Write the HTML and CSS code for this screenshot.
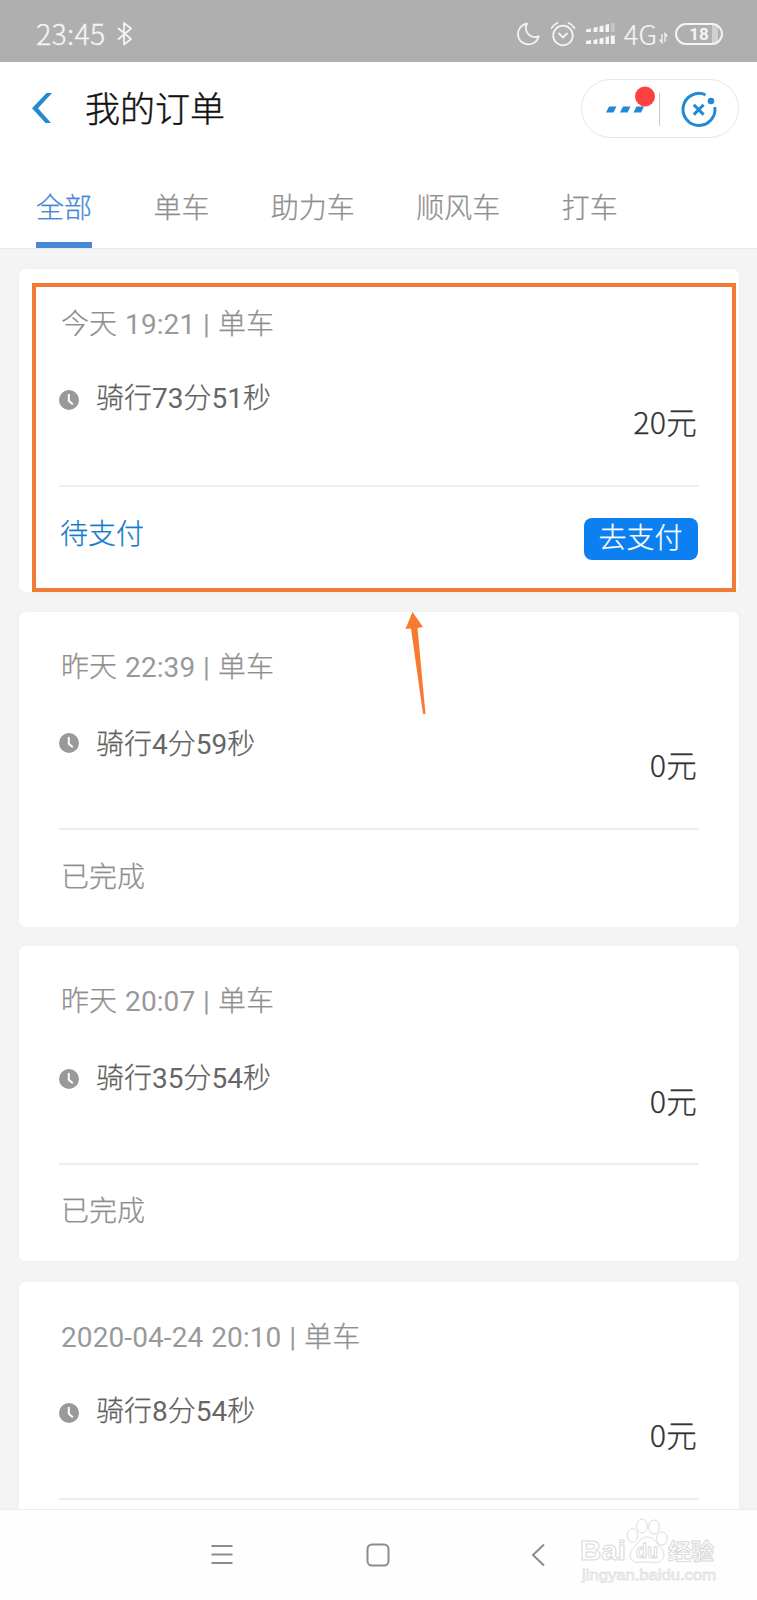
FILE: index.html
```html
<!DOCTYPE html>
<html lang="zh-CN">
<head>
<meta charset="utf-8">
<title>我的订单</title>
<link rel="stylesheet" href="styles.css">
</head>
<body>
<div class="screen">
  <div class="statusbar">
    <div class="status-left">
      <span class="clock">23:45</span>
      <svg class="bluetooth" width="16" height="26" viewBox="0 0 16 26"><path d="M1 7l13 11-7 5.500V2l7 5.500L1 18.500" fill="none" stroke="#f4f4f4" stroke-width="1.800" stroke-linejoin="round"/></svg>
    </div>
    <div class="status-right">
      <svg width="24" height="26" viewBox="0 0 24 26"><path d="M10 2.500C4.500 3.500 1 8 1 13c0 6 4.500 10.300 10.300 10.300 5.200 0 9.200-3.200 10.500-8C14 18.500 6 11 10 2.500z" fill="none" stroke="#f4f4f4" stroke-width="1.800" stroke-linejoin="round"/></svg>
      <svg class="alarm" width="26" height="26" viewBox="0 0 26 26"><g fill="none" stroke="#f4f4f4" stroke-width="1.800" stroke-linecap="round"><circle cx="13" cy="14.500" r="9.800"/><path d="M1.500 7Q3.500 3.500 7.500 2M18.500 2Q22.500 3.500 24.500 7M9 12.500l4 4 4-4"/></g></svg>
      <svg class="signal" width="30" height="24" viewBox="0 0 30 24"><g fill="#f4f4f4"><path d="M0 7.500l5-1V10H0zM7.500 5.800l4-1V10h-4zM13.500 4.300l4-.8V10h-4zM19.500 2.800l3.500-.8v8h-3.500zM0 19l5-1v4H0zM7.500 18l4-1v5h-4zM13.500 16.500l4-1V22h-4zM19.500 15l3.500-.7V22h-3.500zM24.800 13.500h4V22h-4z"/><path d="M24.800 1h4v9h-4z" opacity=".3"/></g></svg>
      <span class="network">4G</span>
      <svg class="updown" width="9" height="12" viewBox="0 0 9 12"><path d="M3 2v8.500L.6 7.500M6 10V1.500l2.400 3" fill="none" stroke="#f4f4f4" stroke-width="1.300"/></svg>
      <span class="battery">18</span>
    </div>
  </div>

  <header class="header">
    <div class="titlebar">
      <svg class="back" width="22" height="32" viewBox="0 0 22 32"><path d="M15.500 1h5.500L7 16.200 20 31h-5.500L1 16.200z" fill="#2389d3"/></svg>
      <h1 class="title">我的订单</h1>
      <div class="capsule">
        <svg width="156" height="57" viewBox="0 0 156 57"><g fill="#2389d3"><path d="M28 26.500h7.500l-3 6H25zM42 26.500h7.500l-3 6H39zM55.500 26.500H63l-3 6h-7.500z"/><circle cx="130" cy="21" r="3.300"/></g><circle cx="64" cy="16.500" r="10" fill="#fc4140"/><path d="M78.500 13v33" stroke="#c9c9c9"/><g fill="none" stroke="#2389d3"><path d="M124.500 14.800a16 16 0 1 0 9.300 12.200" stroke-width="3"/><path d="M112.800 24.800l9.800 9.800M122.600 24.800l-9.800 9.800" stroke-width="3"/></g></svg>
      </div>
    </div>
    <nav class="tabs">
      <span class="tab tab-active">全部</span>
      <span class="tab">单车</span>
      <span class="tab">助力车</span>
      <span class="tab">顺风车</span>
      <span class="tab">打车</span>
    </nav>
  </header>

  <main class="orders">
    <article class="card card-unpaid">
      <div class="when">今天<span class="num"> 19:21 | </span>单车</div>
      <div class="details">
        <svg class="ride-icon" width="20" height="20" viewBox="0 0 20 20"><circle cx="10" cy="10" r="10" fill="#999"/><path d="M9.800 4v6.800l4 3.500" fill="none" stroke="#fff" stroke-width="2"/></svg>
        <span class="duration">骑行<span class="num">73</span>分<span class="num">51</span>秒</span><span class="price">20元</span>
      </div>
      <div class="footer"><span class="state state-unpaid">待支付</span><span class="pay">去支付</span></div>
    </article>
    <article class="card">
      <div class="when">昨天<span class="num"> 22:39 | </span>单车</div>
      <div class="details details-low">
        <svg class="ride-icon" width="20" height="20" viewBox="0 0 20 20"><circle cx="10" cy="10" r="10" fill="#999"/><path d="M9.800 4v6.800l4 3.500" fill="none" stroke="#fff" stroke-width="2"/></svg>
        <span class="duration">骑行<span class="num">4</span>分<span class="num">59</span>秒</span><span class="price">0元</span>
      </div>
      <div class="footer"><span class="state">已完成</span></div>
    </article>
    <article class="card card-raised">
      <div class="when">昨天<span class="num"> 20:07 | </span>单车</div>
      <div class="details">
        <svg class="ride-icon" width="20" height="20" viewBox="0 0 20 20"><circle cx="10" cy="10" r="10" fill="#999"/><path d="M9.800 4v6.800l4 3.500" fill="none" stroke="#fff" stroke-width="2"/></svg>
        <span class="duration">骑行<span class="num">35</span>分<span class="num">54</span>秒</span><span class="price">0元</span>
      </div>
      <div class="footer"><span class="state">已完成</span></div>
    </article>
    <article class="card">
      <div class="when"><span class="num">2020-04-24 20:10 | </span>单车</div>
      <div class="details">
        <svg class="ride-icon" width="20" height="20" viewBox="0 0 20 20"><circle cx="10" cy="10" r="10" fill="#999"/><path d="M9.800 4v6.800l4 3.500" fill="none" stroke="#fff" stroke-width="2"/></svg>
        <span class="duration">骑行<span class="num">8</span>分<span class="num">54</span>秒</span><span class="price">0元</span>
      </div>
    </article>
  </main>

  <nav class="navbar">
    <svg width="22" height="22" viewBox="0 0 22 22"><path d="M.5 2h21M.5 10.500h21M.5 19h21" stroke="#8c8c8c" stroke-width="2"/></svg>
    <svg class="home" width="24" height="24" viewBox="0 0 24 24"><rect x="1.500" y="1.500" width="21" height="21" rx="4.500" fill="none" stroke="#8c8c8c" stroke-width="2"/></svg>
    <svg class="nav-back" width="14" height="24" viewBox="0 0 14 24"><path d="M13 1.500L2 12l11 10.500" fill="none" stroke="#8c8c8c" stroke-width="2"/></svg>
  </nav>

  <div class="highlight"></div>
  <svg class="arrow" width="22" height="104" viewBox="0 0 22 104"><path d="M7.500 0L18 15l-5.500 1L20.500 102h-2.500L6 16.500.5 17z" fill="#f87a30"/></svg>
  <svg class="watermark" width="140" height="74" viewBox="0 0 140 74">
    <g fill="#fff" stroke="#dcdcdc" stroke-width="1">
      <ellipse cx="52.500" cy="26.500" rx="5.300" ry="6.700"/><ellipse cx="62" cy="17" rx="5.300" ry="7"/><ellipse cx="74" cy="18" rx="5.300" ry="7"/><ellipse cx="82" cy="29.500" rx="5.300" ry="6.700"/>
      <path d="M67 28c6 0 9 5 13 10 7 7 4 16-5 15.500-5-.7-11-.7-16 0-9 .5-12-8-5-15 4-5 7-10.500 13-10.500z"/>
    </g>
    <g class="mark-text">
      <text x="0" y="51" font-size="28" textLength="46" lengthAdjust="spacingAndGlyphs">Bai</text>
      <text x="56" y="49" font-size="20" textLength="22" lengthAdjust="spacingAndGlyphs">du</text>
      <text x="88" y="50" font-size="22" textLength="46" lengthAdjust="spacingAndGlyphs">经验</text>
      <text class="mark-url" x="2" y="71" font-size="14" textLength="134" lengthAdjust="spacingAndGlyphs">jingyan.baidu.com</text>
    </g>
  </svg>
</div>
</body>
</html>
```
FILE: styles.css
```css
* { box-sizing: border-box; }
body { margin: 0; background: #f4f4f4; font-family: Roboto, "Noto Sans CJK SC", sans-serif; font-size: 28px; font-weight: 400; }
svg { display: block; flex: none; }
.screen { position: relative; width: 757px; height: 1600px; overflow: hidden; display: flex; flex-direction: column; }

.statusbar { flex: none; height: 62px; padding: 5px 34px 0 36px; display: flex; justify-content: space-between; align-items: center; background: #afafaf; color: #f4f4f4; }
.status-left, .status-right { display: flex; align-items: center; }
.clock { margin-top: -2px; font-family: "Noto Sans CJK SC", sans-serif; font-weight: 300; font-size: 28.5px; line-height: 40px; letter-spacing: 0.3px; -webkit-text-stroke: 0.3px; }
.bluetooth { margin-left: 11px; }
.alarm { margin-left: 9px; }
.signal { margin-left: 10px; }
.network { margin: -2px 0 0 8px; font-family: "Noto Sans CJK SC", sans-serif; font-weight: 300; font-size: 27.5px; line-height: 40px; -webkit-text-stroke: 0.2px; }
.updown { margin: 9px 7px 0 2px; }
.battery { width: 48px; height: 22px; border: 2px solid #f4f4f4; border-radius: 11px; font-size: 17px; font-weight: 700; line-height: 18px; text-align: center; background: linear-gradient(90deg, transparent 35px, #cfcfcf 35px, #cfcfcf 41px, transparent 41px); }

.header { flex: none; height: 187px; background: #fff; border-bottom: 1px solid #e9e9e9; display: flex; flex-direction: column; }
.titlebar { height: 93px; padding: 0 18px 0 31px; display: flex; align-items: center; }
.back { margin-top: -1px; }
.title { margin: -4px 0 0 32px; font-size: 35px; font-weight: 300; line-height: 50px; font-family: "Noto Sans CJK SC", sans-serif; color: #111; -webkit-text-stroke: 0.4px; }
.capsule { width: 158px; height: 59px; margin: 0 0 1px auto; border: 1px solid #e6e6e6; border-radius: 30px; }
.capsule svg { margin-left: -1px; }
.tabs { flex: 1; padding-left: 36px; display: flex; gap: 61.4px; }
.tab { padding-top: 31px; line-height: 40px; font-family: "Noto Sans CJK SC", sans-serif; font-weight: 300; color: #8f8f8f; border-bottom: 6px solid transparent; -webkit-text-stroke: 0.25px; }
.tab-active { color: #4788d6; border-bottom-color: #4788d6; }

.orders { flex: none; height: 1260px; padding: 20px 18px 0 19px; overflow: hidden; display: flex; flex-direction: column; gap: 20px; }
.card { flex: none; height: 315px; padding: 36px 40px 0; background: #fff; border-radius: 7px; box-shadow: 0 0 14px rgba(0, 0, 0, 0.02); }
.card-unpaid { height: 323px; }
.card-raised { margin: -1px 0 1px; }
.when { padding: 0 0 0 2px; height: 40px; line-height: 40px; font-weight: 300; color: #8f8f8f; letter-spacing: 0.1px; -webkit-text-stroke: 0.25px; }
.num { font-weight: 400; -webkit-text-stroke: 0; }
.when .num { color: #999; word-spacing: 0.8px; }
.details { height: 142px; display: flex; align-items: flex-start; border-bottom: 2px solid #eee; }
.ride-icon { margin-top: 45px; }
.duration { margin: 34px 0 0 17px; line-height: 40px; font-weight: 300; color: #606060; -webkit-text-stroke: 0.25px; }
.duration .num { color: #666; }
.card-raised .details { height: 143px; }
.card-raised .ride-icon { margin-top: 47px; }
.card-raised .duration { margin-top: 37px; }
.card-raised .price { margin-top: 58px; }
.details-low .duration { margin-top: 37px; }
.price { margin: 56px 2px 0 auto; font-family: "Noto Sans CJK SC", sans-serif; font-size: 30.5px; line-height: 40px; font-weight: 300; color: #333; letter-spacing: 0.2px; -webkit-text-stroke: 0.25px; }
.footer { padding-right: 1px; display: flex; justify-content: space-between; align-items: flex-start; font-family: "Noto Sans CJK SC", sans-serif; font-weight: 300; -webkit-text-stroke: 0.25px; }
.state { margin-top: 25px; padding-left: 2px; line-height: 40px; color: #8f8f8f; }
.card-raised .state { margin-top: 24px; }
.state-unpaid { padding-left: 1px; color: #1779c9; }
.pay { width: 114px; height: 42px; margin-top: 31px; padding-right: 1px; border-radius: 8px; background: #0c80f0; color: #fff; text-align: center; line-height: 37px; }

.navbar { flex: 1; padding: 0 212px 0 211px; border-top: 1px solid #ededed; background: #fefefe; display: flex; align-items: center; }
.home { margin-left: 133px; }
.nav-back { margin-left: auto; }

.highlight { position: absolute; left: 32px; top: 283px; width: 704px; height: 309px; border: 4px solid #f27a36; }
.arrow { position: absolute; left: 405px; top: 612px; }
.watermark { position: absolute; left: 580px; top: 1509px; }
.mark-text { font-family: "Liberation Sans", "Noto Sans CJK SC", sans-serif; font-weight: 700; fill: #fff; stroke: #d9d9d9; stroke-width: 1; }
.mark-url { font-weight: 400; fill: #fff; stroke: #e2e2e2; stroke-width: 0.8; }
```
